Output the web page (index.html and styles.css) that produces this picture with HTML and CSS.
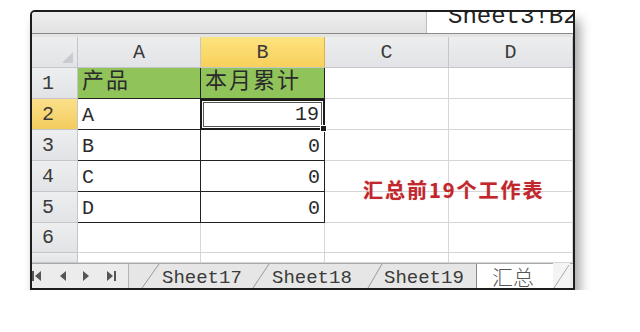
FILE: index.html
```html
<!DOCTYPE html>
<html lang="zh">
<head>
    <meta charset="UTF-8">
    <title>汇总</title>
    <link rel="stylesheet" href="styles.css">
</head>
<body>
    <div class="window">
        <div class="formula-bar">
            <div class="formula-fill"></div>
            <div class="name-box"><span class="name-text">Sheet3!B2</span></div>
        </div>
        <div class="bar-gap"></div>
        <div class="sheet">
            <div class="hd corner"></div>
            <div class="hd col">A</div>
            <div class="hd col active-col">B</div>
            <div class="hd col">C</div>
            <div class="hd col">D</div>

            <div class="hd row">1</div>
            <div class="cell green dk-b dk-r cjk">产品</div>
            <div class="cell green dk-b dk-r cjk">本月累计</div>
            <div class="cell"></div>
            <div class="cell"></div>

            <div class="hd row active-row">2</div>
            <div class="cell dk-b dk-r">A</div>
            <div class="cell num selected">19</div>
            <div class="cell"></div>
            <div class="cell"></div>

            <div class="hd row">3</div>
            <div class="cell dk-b dk-r">B</div>
            <div class="cell num dk-b dk-r">0</div>
            <div class="cell"></div>
            <div class="cell"></div>

            <div class="hd row">4</div>
            <div class="cell dk-b dk-r">C</div>
            <div class="cell num dk-b dk-r">0</div>
            <div class="cell"></div>
            <div class="cell"></div>

            <div class="hd row">5</div>
            <div class="cell dk-b dk-r">D</div>
            <div class="cell num dk-b dk-r">0</div>
            <div class="cell"></div>
            <div class="cell"></div>

            <div class="hd row">6</div>
            <div class="cell"></div>
            <div class="cell"></div>
            <div class="cell"></div>
            <div class="cell"></div>

            <div class="hd row"></div>
            <div class="cell"></div>
            <div class="cell"></div>
            <div class="cell"></div>
            <div class="cell"></div>

            <div class="note">汇总前19个工作表</div>
        </div>
        <div class="tab-bar">
            <div class="nav">
                <svg width="96" height="25" viewBox="0 0 96 25">
                    <rect x="0" y="8" width="2" height="10" fill="#555"/>
                    <path d="M9 8 L3 13 L9 18 Z" fill="#555"/>
                    <path d="M34 8 L28 13 L34 18 Z" fill="#555"/>
                    <path d="M51 8 L57 13 L51 18 Z" fill="#555"/>
                    <path d="M75 8 L81 13 L75 18 Z" fill="#555"/>
                    <rect x="82" y="8" width="2" height="10" fill="#555"/>
                </svg>
            </div>
            <div class="tab-space"></div>
            <svg class="slash" width="20" height="25" viewBox="0 0 20 25"><path d="M2 25 L19 1" stroke="#9a9a9a" fill="none"/></svg>
            <div class="tab t17">Sheet17</div>
            <svg class="slash" width="18" height="25" viewBox="0 0 18 25"><path d="M1 25 L17 1" stroke="#9a9a9a" fill="none"/></svg>
            <div class="tab t18">Sheet18</div>
            <svg class="slash" width="16" height="25" viewBox="0 0 16 25"><path d="M1 25 L15 1" stroke="#9a9a9a" fill="none"/></svg>
            <div class="tab t19">Sheet19</div>
            <div class="tab current">汇总</div>
            <svg class="slash end" width="17" height="25" viewBox="0 0 17 25"><path d="M1 25 L16 2" stroke="#aaa" fill="none"/></svg>
            <div class="tab-rest"></div>
        </div>
    </div>
</body>
</html>
```

FILE: styles.css
```css
body {
    margin: 0;
    background: #fff;
    font-family: "Liberation Mono", "Noto Sans CJK SC", monospace;
    color: #2a2a2a;
}
.window {
    margin: 10px 0 0 30px;
    width: 545px;
    box-sizing: border-box;
    border: 2px solid #1d1d1d;
    border-radius: 5px 0 0 0;
    box-shadow: 5px 10px 12px rgba(0, 0, 0, 0.36);
    overflow: hidden;
    background: #fff;
}
.formula-bar {
    display: flex;
    height: 21px;
}
.formula-fill {
    flex: 1;
    background: linear-gradient(#eeeeee, #e2e2e2);
}
.name-box {
    width: 147px;
    background: #fff;
    border-left: 1px solid #bdbdbd;
    box-sizing: border-box;
    overflow: hidden;
    padding-left: 21px;
}
.name-text {
    display: block;
    font-size: 24px;
    line-height: 24px;
    margin-top: -7px;
    white-space: nowrap;
    color: #222;
}
.bar-gap {
    height: 4px;
    box-sizing: border-box;
    border-top: 1px solid #8a8a8a;
    background: #e4e4e4;
}
.sheet {
    position: relative;
    display: grid;
    grid-template-columns: 46px 123px 124px 124px 124px;
    grid-template-rows: 31px 31px 31px 31px 31px 31px 30px 10px;
    font-size: 20px;
}
.hd {
    background: linear-gradient(#eceeef, #e1e3e6);
    border-right: 1px solid #c4c6c9;
    border-bottom: 1px solid #c4c6c9;
    box-sizing: border-box;
    display: flex;
    align-items: center;
    color: #3a3a3a;
}
.col {
    justify-content: center;
}
.row {
    padding-left: 10px;
}
.corner {
    position: relative;
}
.corner::after {
    content: "";
    position: absolute;
    right: 4px;
    bottom: 4px;
    border-left: 11px solid transparent;
    border-bottom: 11px solid #c9cbce;
}
.active-col {
    background: linear-gradient(#fde37e, #f8d05c);
    border-right-color: #d9b44a;
}
.active-row {
    background: linear-gradient(#fbe08a, #f3cc5e);
}
.cell {
    border-right: 1px solid #d6d6d6;
    border-bottom: 1px solid #d6d6d6;
    box-sizing: border-box;
    display: flex;
    align-items: flex-end;
    padding: 0 4px 2px;
    white-space: nowrap;
}
.cjk {
    font-size: 22px;
    letter-spacing: 2px;
    line-height: 26px;
}
.green {
    background: #90c35a;
}
.dk-b {
    border-bottom-color: #222;
}
.dk-r {
    border-right-color: #222;
}
.num {
    justify-content: flex-end;
    padding-right: 4px;
}
.selected {
    position: relative;
    border: 2px solid #1a1a1a;
    box-shadow: inset 0 0 0 1px #fff, inset 0 0 0 2px #555;
    margin-left: -1px;
}
.selected::after {
    content: "";
    position: absolute;
    right: -4px;
    bottom: -4px;
    width: 5px;
    height: 5px;
    background: #1a1a1a;
    border: 1px solid #fff;
}
.note {
    position: absolute;
    left: 331px;
    top: 141px;
    font-family: "Noto Sans CJK SC", sans-serif;
    font-size: 20px;
    font-weight: 700;
    line-height: 24px;
    letter-spacing: 2px;
    color: #c1272d;
    text-shadow: 0 0 1px rgba(193, 39, 45, 0.5);
}
.tab-bar {
    display: flex;
    height: 25px;
    border-top: 1px solid #a8a8a8;
    box-sizing: border-box;
    background: #e6e6e6;
    font-size: 19px;
    color: #3a3a3a;
}
.nav {
    width: 96px;
    border-right: 1px solid #b4b4b4;
    background: #ececec;
    flex: none;
}
.nav svg {
    display: block;
    margin-top: -1px;
}
.tab-space {
    width: 11px;
    flex: none;
}
.slash {
    display: block;
    flex: none;
    margin-top: -1px;
}
.tab {
    flex: none;
    display: flex;
    align-items: center;
    white-space: nowrap;
    line-height: 24px;
    padding-top: 3px;
    box-sizing: border-box;
}
.t17 {
    width: 92px;
    padding-left: 2px;
}
.t18 {
    width: 97px;
    padding-left: 2px;
}
.t19 {
    width: 94px;
    border-right: 1px solid #8a8a8a;
    padding-left: 1px;
}
.current {
    width: 76px;
    background: #fff;
    padding-left: 15px;
    padding-top: 0;
    font-family: "Noto Sans CJK SC", sans-serif;
    font-weight: 300;
    font-size: 21px;
    line-height: 22px;
    color: #555;
}
.slash.end {
    background: #f4f4f4;
}
.tab-rest {
    flex: 1;
    background: #ececec;
}
```
